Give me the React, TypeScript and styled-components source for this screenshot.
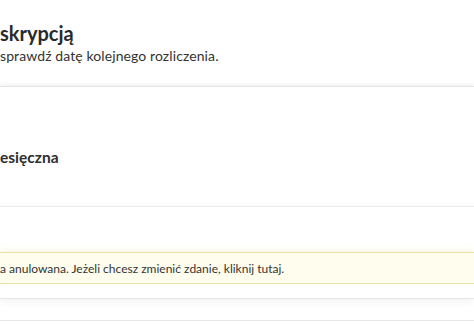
import styled, { createGlobalStyle } from "styled-components";

const GlobalStyle = createGlobalStyle`
  html, body {
    margin: 0;
    padding: 0;
    background: #ffffff;
  }
  body {
    font-family: Lato, "Noto Sans", sans-serif;
    color: #2e2e2e;
    overflow: hidden;
  }
`;

const Page = styled.div`
  width: 474px;
  height: 324px;
  overflow: hidden;
  display: flex;
  flex-direction: column;
`;

const Header = styled.header`
  padding-top: 21px;
  display: flex;
  flex-direction: column;
  gap: 2px;
`;

const Title = styled.h1`
  margin: 0;
  font-size: 20px;
  line-height: 24px;
  font-weight: 700;
  color: #2a2a2a;
`;

const Subtitle = styled.p`
  margin: 0;
  font-size: 14px;
  line-height: 17px;
  letter-spacing: 0.1px;
  color: #333333;
`;

const Card = styled.section`
  margin-top: 22px;
  background: #ffffff;
  border-top: 1px solid #e4e4e4;
  border-bottom: 1px solid #e6e6e6;
  box-shadow: 0 -2px 3px rgba(0, 0, 0, 0.04), 0 3px 8px rgba(0, 0, 0, 0.05);
  padding-top: 61px;
  padding-bottom: 14px;
  display: flex;
  flex-direction: column;
`;

const PlanName = styled.h2`
  margin: 0;
  font-size: 15.5px;
  line-height: 19px;
  font-weight: 700;
  color: #2e2e2e;
`;

const Divider = styled.hr`
  margin: 39px 0 0;
  border: 0;
  border-top: 1px solid #ebebeb;
`;

const Alert = styled.div`
  margin-top: 45px;
  height: 30px;
  display: flex;
  align-items: center;
  background: #fffdee;
  border-top: 1px solid #e9df9f;
  border-bottom: 1px solid #e9df9f;
  box-shadow: 0 -3px 6px rgba(240, 230, 170, 0.25);
  font-size: 12px;
  color: #333333;
`;

const Link = styled.span`
  cursor: pointer;
`;

const NextCard = styled.section`
  margin-top: 21px;
  flex: 1;
  background: #ffffff;
  border-top: 1px solid #e8e8e8;
`;

export default function App() {
  return (
    <>
      <GlobalStyle />
      <Page>
        <Header>
          <Title>skrypcją</Title>
          <Subtitle>sprawdź datę kolejnego rozliczenia.</Subtitle>
        </Header>
        <Card>
          <PlanName>esięczna</PlanName>
          <Divider />
          <Alert>
            a anulowana. Jeżeli chcesz zmienić zdanie,&nbsp;<Link>kliknij tutaj.</Link>
          </Alert>
        </Card>
        <NextCard />
      </Page>
    </>
  );
}
